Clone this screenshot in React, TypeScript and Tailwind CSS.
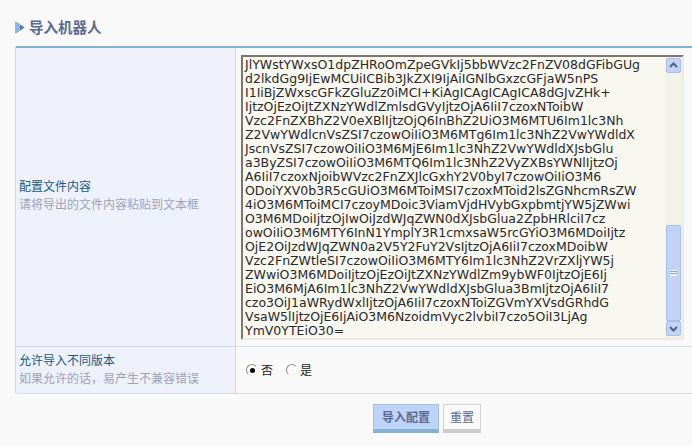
const CONFIG_LINES = [
  'JlYWstYWxsO1dpZHRoOmZpeGVkIj5bbWVzc2FnZV08dGFibGUg',
  'd2lkdGg9IjEwMCUiICBib3JkZXI9IjAiIGNlbGxzcGFjaW5nPS',
  'I1IiBjZWxscGFkZGluZz0iMCI+KiAgICAgICAgICA8dGJvZHk+',
  'IjtzOjEzOiJtZXNzYWdlZmlsdGVyIjtzOjA6IiI7czoxNToibW',
  'Vzc2FnZXBhZ2V0eXBlIjtzOjQ6InBhZ2UiO3M6MTU6Im1lc3Nh',
  'Z2VwYWdlcnVsZSI7czowOiIiO3M6MTg6Im1lc3NhZ2VwYWdldX',
  'JscnVsZSI7czowOiIiO3M6MjE6Im1lc3NhZ2VwYWdldXJsbGlu',
  'a3ByZSI7czowOiIiO3M6MTQ6Im1lc3NhZ2VyZXBsYWNlIjtzOj',
  'A6IiI7czoxNjoibWVzc2FnZXJlcGxhY2V0byI7czowOiIiO3M6',
  'ODoiYXV0b3R5cGUiO3M6MToiMSI7czoxMToid2lsZGNhcmRsZW',
  '4iO3M6MToiMCI7czoyMDoic3ViamVjdHVybGxpbmtjYW5jZWwi',
  'O3M6MDoiIjtzOjIwOiJzdWJqZWN0dXJsbGlua2ZpbHRlciI7cz',
  'owOiIiO3M6MTY6InN1YmplY3R1cmxsaW5rcGYiO3M6MDoiIjtz',
  'OjE2OiJzdWJqZWN0a2V5Y2FuY2VsIjtzOjA6IiI7czoxMDoibW',
  'Vzc2FnZWtleSI7czowOiIiO3M6MTY6Im1lc3NhZ2VrZXljYW5j',
  'ZWwiO3M6MDoiIjtzOjEzOiJtZXNzYWdlZm9ybWF0IjtzOjE6Ij',
  'EiO3M6MjA6Im1lc3NhZ2VwYWdldXJsbGlua3BmIjtzOjA6IiI7',
  'czo3OiJ1aWRydWxlIjtzOjA6IiI7czoxNToiZGVmYXVsdGRhdG',
  'VsaW5lIjtzOjE6IjAiO3M6NzoidmVyc2lvbiI7czo5OiI3LjAg',
  'YmV0YTEiO30=',
];

function ScrollButton({ up }: { up?: boolean }) {
  return (
    <div className="flex h-[15px] w-[15px] items-center justify-center rounded-[2px] border border-[#a9bfe8] bg-[#c3d3f5]">
      <svg width="9" height="7" viewBox="0 0 9 7">
        <path d={up ? 'M1 5 L4.5 1.5 L8 5' : 'M1 2 L4.5 5.5 L8 2'} fill="none" stroke="#4d6185" strokeWidth="2" />
      </svg>
    </div>
  );
}

function Radio({ checked }: { checked?: boolean }) {
  return (
    <span className="flex h-[12px] w-[12px] items-center justify-center rounded-full border border-t-[#8f8f8f] border-r-[#eeeeee] border-b-[#eeeeee] border-l-[#8f8f8f] bg-[#fbfbf6]">
      {checked && <span className="h-[5px] w-[5px] rounded-full bg-black" />}
    </span>
  );
}

export default function App() {
  return (
    <div className="h-[446px] w-[692px] overflow-hidden bg-[#f9f9f9] font-['Noto_Sans_CJK_SC',sans-serif] text-[12px]">
      {/* Title */}
      <div className="flex h-[46px] items-center pt-[9px] pl-[15px]">
        <svg width="10" height="13" viewBox="0 0 10 13" className="mr-[4px]">
          <path d="M0.5 0.5 L9.5 6.5 L0.5 12.5 Z" fill="#3f78c4" />
          <path d="M0.5 0.5 L5 3.5 L5 9.5 L0.5 12.5 Z" fill="#8db4e4" />
        </svg>
        <h2 className="text-[14.5px] leading-none font-bold text-[#5c6a92]">导入机器人</h2>
      </div>

      {/* Form table */}
      <div className="ml-[15px] overflow-hidden rounded-bl-[3px] border-b border-l border-b-[#d5d9e4] border-l-[#d5d9e4]">
        <div className="border-t-[2px] border-t-[#7fb3cf]">
          <div className="flex h-[299px] border-b border-b-[#d5d9e4]">
            <div className="flex w-[220px] flex-col justify-center border-r border-r-[#d0d4e0] bg-[#eef0fa] pb-[5px] pl-[3px] leading-[18px]">
              <div className="text-[#1a5a84]">配置文件内容</div>
              <div className="text-[#a0a3b8]">请将导出的文件内容粘贴到文本框</div>
            </div>
            <div className="flex-1 pt-[7px] pl-[5px]">
              <div className="flex h-[285px] w-[443px] border-2 border-t-[#7a786c] border-r-[#ecebe2] border-b-[#ecebe2] border-l-[#7a786c] bg-[#f8f7f0]">
                <div className="flex-1 overflow-hidden pt-[1px] pl-[2px] font-['DejaVu_Sans',sans-serif] text-[12.5px] leading-[14px] whitespace-nowrap text-[#2a2a2a]">
                  {CONFIG_LINES.map(line => (
                    <div key={line}>{line}</div>
                  ))}
                </div>
                <div className="flex w-[17px] flex-col items-center bg-[#f3f2ea] pt-[1px]">
                  <ScrollButton up />
                  <div className="mt-[152px] flex h-[96px] w-[15px] items-center justify-center rounded-[2px] border border-[#a9bfe8] bg-[#c3d3f5]">
                    <div className="h-[6px] w-[7px] border-y border-y-[#eef3fd] bg-[linear-gradient(#8ea6d6_50%,#eef3fd_50%)] bg-[length:100%_2px]" />
                  </div>
                  <ScrollButton />
                </div>
              </div>
            </div>
          </div>
          <div className="flex h-[46px]">
            <div className="flex w-[220px] flex-col justify-center border-r border-r-[#d0d4e0] bg-[#eef0fa] pb-[3px] pl-[3px] leading-[18px]">
              <div className="text-[#1a5a84]">允许导入不同版本</div>
              <div className="text-[#a0a3b8]">如果允许的话，易产生不兼容错误</div>
            </div>
            <div className="flex flex-1 items-center pl-[10px] text-[#222222]">
              <Radio checked />
              <span className="ml-[3px]">否</span>
              <span className="ml-[13px]"><Radio /></span>
              <span className="ml-[2px]">是</span>
            </div>
          </div>
        </div>
      </div>

      {/* Actions */}
      <div className="mt-[10px] flex gap-[4px] pl-[373px]">
        <button className="h-[29px] w-[66px] border border-b-[4px] border-[#a3c0e8] border-b-[#88b3cf] bg-[#bcd4f7] text-[12px] font-bold text-[#5c6a92]">
          导入配置
        </button>
        <button className="h-[29px] w-[38px] border border-b-[4px] border-[#d2d2d2] border-b-[#cccccc] bg-[#fafafa] text-[12px] text-[#5c6a92]">
          重置
        </button>
      </div>
    </div>
  );
}
